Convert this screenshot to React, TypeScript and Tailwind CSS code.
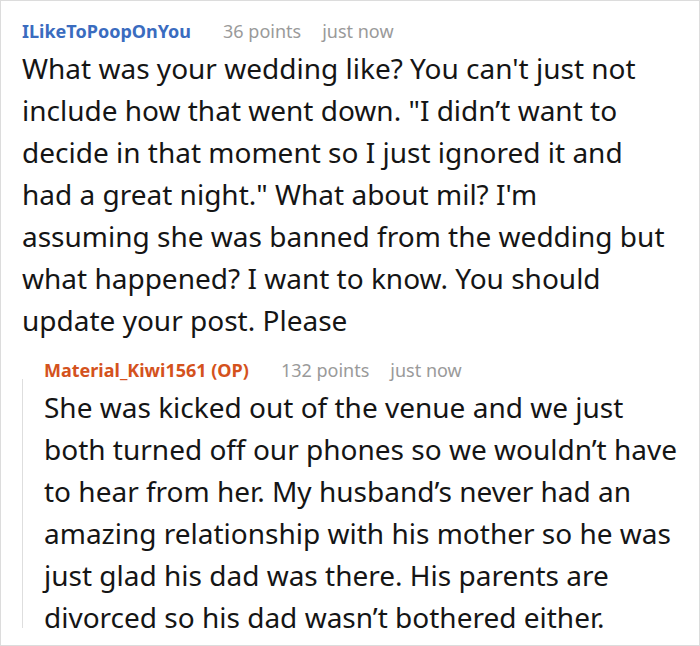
import React from "react";

type CommentProps = {
  author: string;
  authorClass: string;
  points: number;
  time: string;
  lines: string[];
};

function Comment({ author, authorClass, points, time, lines }: CommentProps) {
  return (
    <div>
      <div className="flex items-baseline text-[18px] leading-[24px]">
        <span className={`font-bold ${authorClass}`}>{author}</span>
        <span className="ml-[32px] text-[#9a9a9a]">{points} points</span>
        <span className="ml-[21px] text-[#9a9a9a]">{time}</span>
      </div>
      <p className="mt-[4px] text-[28px] leading-[42px] text-[#151515]">
        {lines.map((line, i) => (
          <span key={i} className="block whitespace-nowrap">
            {line}
          </span>
        ))}
      </p>
    </div>
  );
}

export default function App() {
  return (
    <div
      className="h-[646px] w-[700px] overflow-hidden border border-[#dcdcdc] bg-white pl-[21px] pt-[18px]"
      style={{ fontFamily: '"Noto Sans", "Open Sans", sans-serif' }}
    >
      <Comment
        author="ILikeToPoopOnYou"
        authorClass="text-[#3a6cbf]"
        points={36}
        time="just now"
        lines={[
          "What was your wedding like? You can't just not",
          "include how that went down. \"I didn’t want to",
          "decide in that moment so I just ignored it and",
          "had a great night.\" What about mil? I'm",
          "assuming she was banned from the wedding but",
          "what happened? I want to know. You should",
          "update your post. Please",
        ]}
      />
      <div className="mt-[17px] flex">
        <div className="mb-[10px] mt-[21px] w-px shrink-0 bg-[#dedede]" />
        <div className="pl-[21px]">
          <Comment
            author="Material_Kiwi1561 (OP)"
            authorClass="text-[#d4521d]"
            points={132}
            time="just now"
            lines={[
              "She was kicked out of the venue and we just",
              "both turned off our phones so we wouldn’t have",
              "to hear from her. My husband’s never had an",
              "amazing relationship with his mother so he was",
              "just glad his dad was there. His parents are",
              "divorced so his dad wasn’t bothered either.",
            ]}
          />
        </div>
      </div>
    </div>
  );
}
